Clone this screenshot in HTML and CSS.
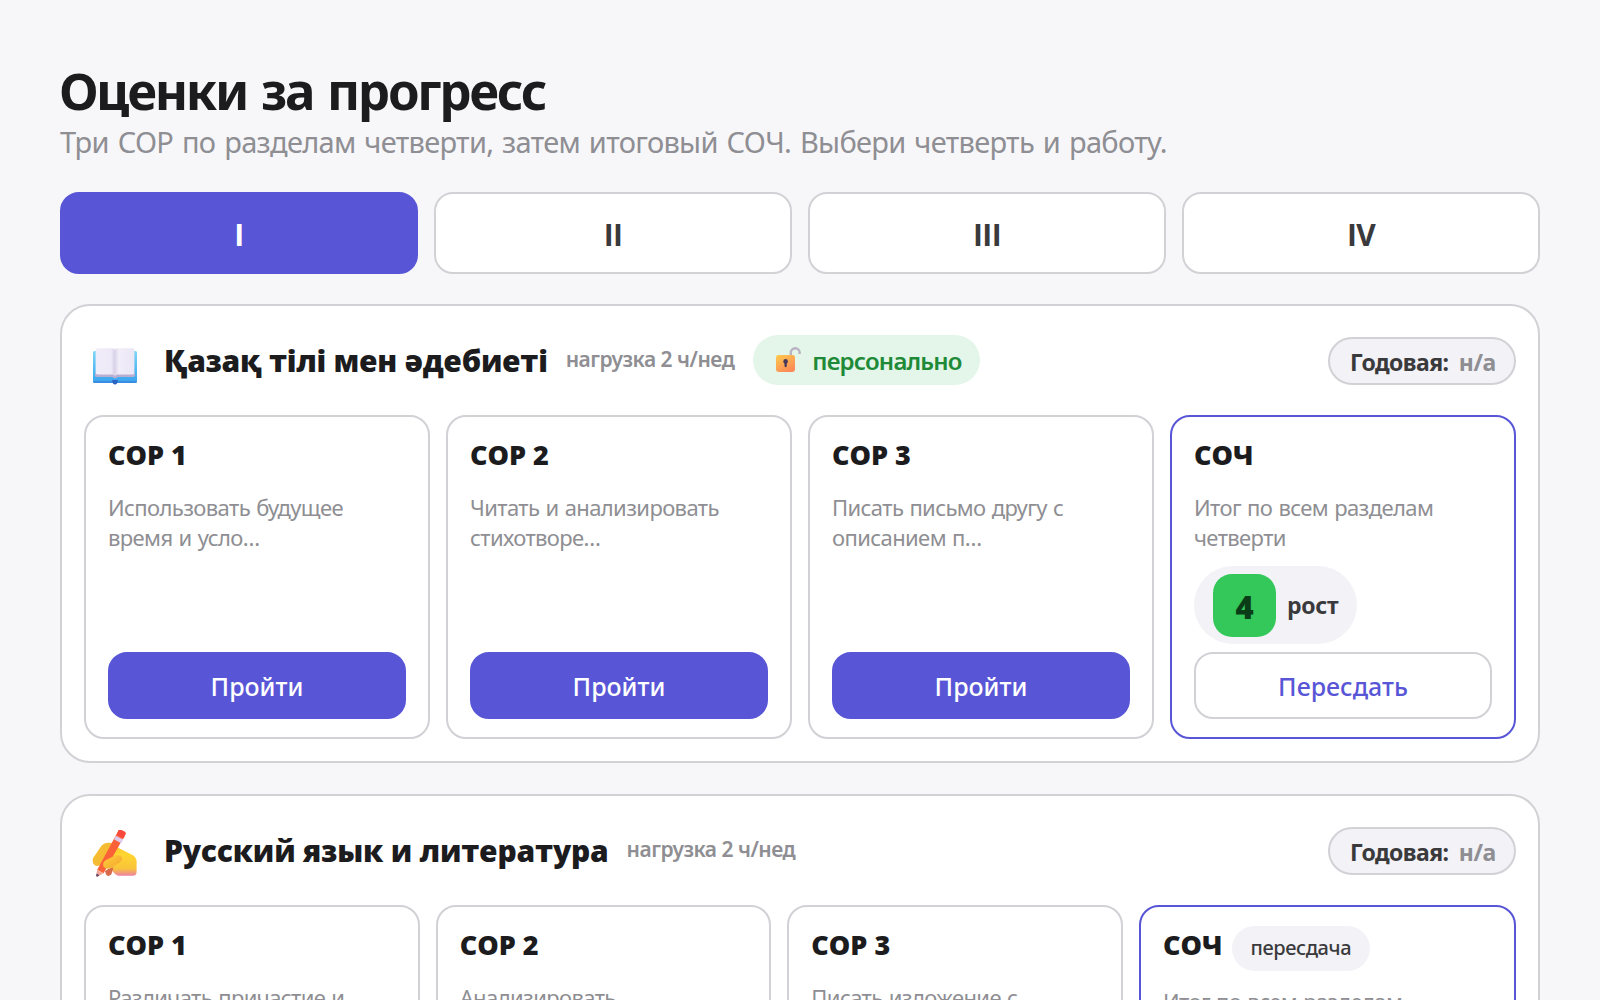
FILE: index.html
```
<!DOCTYPE html>
<html lang="ru">
<head>
    <meta charset="utf-8">
    <title>Оценки за прогресс</title>
    <link rel="stylesheet" href="styles.css">
</head>
<body>
    <h1>Оценки за прогресс</h1>
    <p class="sub">Три СОР по разделам четверти, затем итоговый СОЧ. Выбери четверть и работу.</p>

    <div class="quarters">
        <button class="quarter active">I</button>
        <button class="quarter">II</button>
        <button class="quarter">III</button>
        <button class="quarter">IV</button>
    </div>

    <section class="subject">
        <div class="subject-head">
            <svg class="emoji" viewBox="0 0 48 48">
                <defs>
                    <linearGradient id="cover" x1="0" y1="0" x2="0" y2="1"><stop offset="0" stop-color="#7fd6f5"/><stop offset=".75" stop-color="#45b2f2"/><stop offset="1" stop-color="#3fa0ee"/></linearGradient>
                    <linearGradient id="pageL" x1="0" y1="0" x2="1" y2="0"><stop offset="0" stop-color="#f1edf9"/><stop offset=".8" stop-color="#eee9f8"/><stop offset="1" stop-color="#d6cfe6"/></linearGradient>
                    <linearGradient id="pageR" x1="0" y1="0" x2="1" y2="0"><stop offset="0" stop-color="#dcd5ea"/><stop offset=".2" stop-color="#f1edf9"/><stop offset="1" stop-color="#ebe6f5"/></linearGradient>
                </defs>
                <rect x="2" y="9" width="44" height="32" rx="1.6" fill="url(#cover)"/>
                <path d="M2.4 39.400h43.200v1.200H2.400z" fill="#3478d4"/>
                <path d="M21 38h6l-1 3.600c-.8 1.200-3.200 1.200-4 0z" fill="#2b62c4"/>
                <path d="M4 31h40v2.400q0 1.600-2 1.600H27l-3 1.400-3-1.400H6q-2 0-2-1.600z" fill="#b9aed2"/>
                <path d="M4.600 8.600q0-2.400 2.200-2.400H21q3 .2 3 2v26q-.6-1.800-3-1.800H6.600q-2 0-2-1.600z" fill="url(#pageL)"/>
                <path d="M43.400 8.600q0-2.400-2.200-2.400H27q-3 .2-3 2v26q.6-1.800 3-1.800h14.400q2 0 2-1.600z" fill="url(#pageR)"/>
            </svg>
            <h2 class="kz">Қазақ тілі мен әдебиеті</h2>
            <span class="load">нагрузка 2 ч/нед</span>
            <span class="personal">
                <svg class="lock" viewBox="0 0 26 26">
                    <defs><linearGradient id="body" x1="0" y1="0" x2=".6" y2="1"><stop offset="0" stop-color="#ffcb4b"/><stop offset="1" stop-color="#fb8b58"/></linearGradient></defs>
                    <path d="M15.800 8V5.600a4.400 4.400 0 0 1 8.800 0V7" fill="none" stroke="#b9b2c2" stroke-width="2.400"/>
                    <rect x="1" y="8" width="19" height="17" rx="2.400" fill="url(#body)"/>
                    <circle cx="10.600" cy="14.400" r="2.300" fill="#473a5c"/>
                    <rect x="9.500" y="14.600" width="2.300" height="5.600" rx="1.100" fill="#473a5c"/>
                </svg>
                персонально
            </span>
            <span class="year">Годовая: <b>н/а</b></span>
        </div>
        <div class="works">
            <div class="work">
                <div class="work-head"><h3>СОР 1</h3></div>
                <p>Использовать будущее время и усло…</p>
                <button class="go">Пройти</button>
            </div>
            <div class="work">
                <div class="work-head"><h3>СОР 2</h3></div>
                <p>Читать и анализировать стихотворе…</p>
                <button class="go">Пройти</button>
            </div>
            <div class="work">
                <div class="work-head"><h3>СОР 3</h3></div>
                <p>Писать письмо другу с описанием п…</p>
                <button class="go">Пройти</button>
            </div>
            <div class="work final">
                <div class="work-head"><h3>СОЧ</h3></div>
                <p>Итог по всем разделам четверти</p>
                <div class="result"><span class="grade">4</span>рост</div>
                <button class="go again">Пересдать</button>
            </div>
        </div>
    </section>

    <section class="subject">
        <div class="subject-head">
            <svg class="emoji up" viewBox="0 0 48 48">
                <defs>
                    <linearGradient id="hand" x1="0" y1="0" x2="0" y2="1"><stop offset="0" stop-color="#f7bd2c"/><stop offset=".35" stop-color="#ffd631"/><stop offset=".78" stop-color="#f9c43a"/><stop offset="1" stop-color="#ee82a4"/></linearGradient>
                    <linearGradient id="finger" x1="0" y1="0" x2="1" y2="1"><stop offset="0" stop-color="#ffd23a"/><stop offset="1" stop-color="#f3a02f"/></linearGradient>
                </defs>
                <path d="M12 14.500q3-2.600 9-1.400l7 5.100 14 7q3 1.600 3.600 5v11.900q0 3.600-3.600 3.600H27q-3-.6-5-4l-6-7-11-1q-4.500-1.600-2.800-6z" fill="url(#hand)"/>
                <path d="M9.600 17q4-4.600 10-3.400l-8 18.400q-2.600 4.600-7 3.800-4-2-2.400-7.200z" fill="#f5bb33"/>
                <path d="M14 41q3-3 8.400-3.600l-2 6.800q-3.200 3.400-5.400.4z" fill="#d9694a"/>
                <path d="M27.500.6q.8-1.400 2.200-.8l4 2q1.400.8.800 2.200L12.600 43.200l-6.400-3.400z" fill="#fb6238"/>
                <path d="M25.700 4.800l7 3.600 1.800-4.200q.5-1.600-.8-2.400l-4-2q-1.400-.6-2.200.8z" fill="#f9483c"/>
                <path d="M25 5.800l7 3.600-1.700 3.800-7.200-3.600z" fill="#dccbee"/>
                <path d="M6.200 39.800l6.400 3.400-6 3.400q-1.400.4-1.400-1z" fill="#f0a797"/>
                <path d="M5.600 43.400l2.800 1.900-1.800 1.300q-1.400.4-1.400-1z" fill="#5d4265"/>
                <path d="M24 25.600q6-1.400 7 2 1 3.400-3 5.400l-8.600 5q-4 2-6.600-1-2-4 1.800-6.800z" fill="url(#finger)"/>
            </svg>
            <h2>Русский язык и литература</h2>
            <span class="load">нагрузка 2 ч/нед</span>
            <span class="year">Годовая: <b>н/а</b></span>
        </div>
        <div class="works with-retake">
            <div class="work">
                <div class="work-head"><h3>СОР 1</h3></div>
                <p>Различать причастие и деепричас…</p>
                <button class="go">Пройти</button>
            </div>
            <div class="work">
                <div class="work-head"><h3>СОР 2</h3></div>
                <p>Анализировать художественный…</p>
                <button class="go">Пройти</button>
            </div>
            <div class="work">
                <div class="work-head"><h3>СОР 3</h3></div>
                <p>Писать изложение с элементами…</p>
                <button class="go">Пройти</button>
            </div>
            <div class="work final">
                <div class="work-head retake"><h3>СОЧ</h3><span class="tag">пересдача</span></div>
                <p>Итог по всем разделам четверти</p>
                <button class="go again">Пересдать</button>
            </div>
        </div>
    </section>
</body>
</html>
```
FILE: styles.css
```
*{box-sizing:border-box;}
html{overflow:hidden;}
body{
    margin: 0;
    padding: 60px 60px 0;
    height: 1000px;
    overflow: hidden;
    background: #f7f7fa;
    color: #1c1c1e;
    font-family: "Noto Sans", sans-serif;
}
h1,h2,h3,p{margin:0;}
h1{
    font-size: 51px;
    line-height: 61px;
    font-weight: 700;
    letter-spacing: -2.3px;
    word-spacing: 3px;
    margin-left: -1px;
}
.sub{
    font-size: 29px;
    line-height: 40px;
    padding-top: 1px;
    color: #8e8e93;
    letter-spacing: -0.7px;
    word-spacing: 2px;
    white-space: nowrap;
}
button{font-family: inherit; padding: 0; cursor: pointer;}

.quarters{display: grid; grid-template-columns: repeat(4, 1fr); gap: 16px; margin: 30px 0;}
.quarter{
    height: 82px;
    padding-top: 3px;
    background: #fff;
    border: 2px solid #d1d1d6;
    border-radius: 19px;
    font: 700 30px "Open Sans", sans-serif;
    letter-spacing: -0.6px;
    color: #3a3a3c;
}
.quarter.active{background: #5856d6; border-color: #5856d6; color: #fff;}

.subject{background: #fff; border: 2px solid #d1d1d6; border-radius: 30px; padding: 22px; margin-bottom: 31px;}
.subject-head{display: flex; align-items: center; height: 66px; margin-bottom: 21px;}
.emoji{width: 48px; height: 48px; margin: 10px 25px 0 7px;}
.emoji.up{margin-top: 6px;}
h2,h3,.grade{font-family: "Open Sans", sans-serif; font-weight: 800;}
h2{font-size: 30px; line-height: 40px; letter-spacing: -0.2px; margin-right: 18px;}
h2.kz{letter-spacing: -0.28px;}
.load{font-size: 21px; font-weight: 600; color: #8e8e93; letter-spacing: -0.5px; margin: -4px 19px 0 0;}
.personal{
    display: flex;
    align-items: center;
    height: 50px;
    width: 227px;
    padding-left: 22px;
    margin-top: -2px;
    border-radius: 25px;
    background: #e3f6e9;
    color: #1e8a38;
    font-size: 24px;
    font-weight: 600;
    letter-spacing: -0.82px;
}
.lock{width: 26px; height: 26px; margin-right: 11px;}
.year{
    margin-left: auto;
    width: 188px;
    height: 48px;
    line-height: 46px;
    padding-left: 20px;
    border: 2px solid #d1d1d6;
    border-radius: 24px;
    background: #f2f2f7;
    color: #3a3a3c;
    font-size: 23px;
    font-weight: 700;
    letter-spacing: -0.55px;
}
.year b{font-weight: 700; color: #8e8e93; margin-left: 5px;}

.works{display: grid; grid-template-columns: repeat(4, 1fr); gap: 16px;}
.works.with-retake{grid-template-columns: repeat(3, 1fr) 377px;}
.work{
    display: flex;
    flex-direction: column;
    height: 324px;
    padding: 22px 22px 18px;
    border: 2px solid #d1d1d6;
    border-radius: 20px;
}
.work.final{border-color: #5856d6;}
.work-head{display: flex; align-items: center; height: 32px; margin-bottom: 21px;}
.work-head.retake{margin-bottom: 25px;}
h3{font-size: 27px; line-height: 32px;}
.tag{
    height: 45px;
    line-height: 44px;
    padding: 0 19px;
    margin: 6px 0 0 9px;
    border-radius: 23px;
    background: #f2f2f7;
    color: #3a3a3c;
    font-size: 20px;
    font-weight: 500;
    letter-spacing: -0.4px;
}
.work p{font-size: 22px; line-height: 30px; color: #8e8e93; letter-spacing: -0.6px; word-spacing: 1px;}
.result{
    display: flex;
    align-items: center;
    gap: 11px;
    align-self: flex-start;
    height: 78px;
    margin-top: 14px;
    padding: 0 19px;
    border-radius: 39px;
    background: #f2f2f7;
    color: #3a3a3c;
    font-size: 23px;
    font-weight: 700;
    letter-spacing: -0.3px;
}
.grade{
    width: 63px;
    height: 63px;
    line-height: 66px;
    border-radius: 19px;
    background: #34c759;
    color: #0a3d17;
    text-align: center;
    font-size: 31px;
}
.go{
    height: 67px;
    margin-top: auto;
    flex-shrink: 0;
    border: 2px solid #5856d6;
    border-radius: 19px;
    background: #5856d6;
    color: #fff;
    font-size: 25px;
    font-weight: 500;
}
.go.again{background: #fff; border-color: #d1d1d6; color: #5856d6;}
```
